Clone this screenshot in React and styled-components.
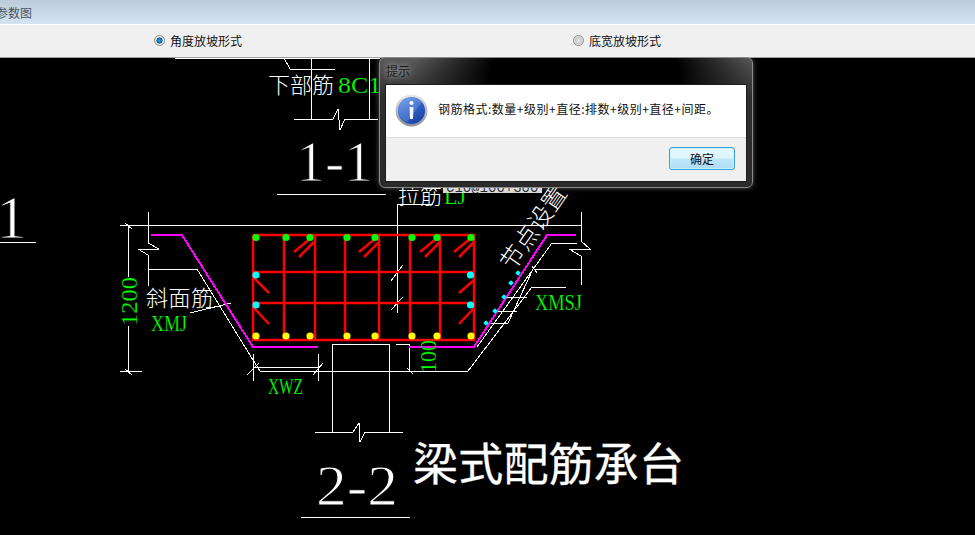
import React from "react";
import styled, { createGlobalStyle } from "styled-components";

const Global = createGlobalStyle`
  html, body { margin: 0; padding: 0; background: #000; overflow: hidden; }
  * { box-sizing: border-box; }
`;

const UI_FONT = `"Noto Sans CJK SC", "Liberation Sans", sans-serif`;

const Page = styled.div`
  position: relative;
  width: 975px;
  height: 535px;
  display: flex;
  flex-direction: column;
  font-family: ${UI_FONT};
  font-size: 12px;
  color: #111;
`;

const TitleBar = styled.div`
  height: 25px;
  flex: none;
  display: flex;
  align-items: center;
  margin-left: -4px;
  color: #4a5560;
  background: linear-gradient(#bbcbda, #d6e4f2);
  border-bottom: 1px solid #fff;
`;

const OptionsBar = styled.div`
  height: 33px;
  flex: none;
  display: flex;
  align-items: center;
  padding: 0 0 1px 154px;
  background: #f0f0f0;
  border-bottom: 1px solid #a0a0a0;
`;

const Option = styled.label`
  flex: none;
  width: 419px;
  display: flex;
  align-items: center;
  gap: 5px;
`;

const RadioMark = styled.span`
  width: 11px;
  height: 11px;
  border-radius: 50%;
  border: 1px solid #8d8d8d;
  display: block;
  background: ${(p) =>
    p.$on
      ? "radial-gradient(circle, #2ea6dc 0, #0a5f9e 45%, #f4f4f4 52%, #dcdcdc 100%)"
      : "radial-gradient(circle, #e8e8e8 0, #c8c8c8 55%, #f0f0f0 70%, #dedede 100%)"};
`;

const Canvas = styled.div`
  position: relative;
  flex: 1;
  background: #000;
`;

const Drawing = styled.svg`
  display: block;
  width: 975px;
  height: 477px;
`;

const Wire = styled.polyline`
  fill: none;
  stroke: ${(p) => p.$color || "#fff"};
  stroke-width: ${(p) => p.$w || 1}px;
  shape-rendering: ${(p) => (p.$smooth ? "auto" : "crispEdges")};
`;

const Dot = styled.circle`
  fill: ${(p) => p.$color};
`;

const Diamond = styled.rect`
  fill: #00ffff;
`;

const CadCn = styled.text`
  font-family: "Noto Sans CJK SC", sans-serif;
  font-weight: 300;
  fill: #fff;
  font-size: ${(p) => p.$size || 22}px;
`;

const CadHeading = styled.text`
  font-family: "Noto Sans CJK SC", sans-serif;
  font-weight: 400;
  fill: #fff;
  stroke: #fff;
  stroke-width: 0.3px;
  font-size: 45px;
`;

/* the black stroke over the fill thins the glyphs to the hairline look of CAD text */
const CadLatin = styled.text`
  font-family: "Liberation Serif", serif;
  fill: ${(p) => p.$color || "#00ff00"};
  stroke: #000;
  stroke-width: ${(p) => p.$thin || 0.2}px;
  font-size: ${(p) => p.$size || 24}px;
`;

const Tag = styled.div`
  position: absolute;
  left: 443px;
  top: 128px;
  width: 99px;
  height: 7px;
  overflow: hidden;
  background: #d8d8d8;
  font-family: "Liberation Mono", monospace;
  font-size: 14px;
  line-height: 9px;
  color: #222;
  padding-left: 3px;
  white-space: nowrap;
  display: flex;
  align-items: flex-end;
`;

const Dialog = styled.div`
  position: absolute;
  left: 379px;
  top: 57px;
  width: 374px;
  height: 131px;
  padding: 0 5px 5px 5px;
  display: flex;
  flex-direction: column;
  border: 1px solid #8a8a8a;
  border-radius: 6px;
  box-shadow: 0 0 5px rgba(255, 255, 255, 0.35);
  background:
    radial-gradient(ellipse 46% 60% at 55% 12%, #000 55%, rgba(0, 0, 0, 0) 100%),
    linear-gradient(#5a5a5a, #2e2e2e 30%, #2a2a2a);
`;

const DialogTitle = styled.div`
  height: 26px;
  flex: none;
  display: flex;
  align-items: center;
  padding: 0 0 1px 1px;
  font-size: 12px;
  color: #1a1a1a;
  text-shadow: 0 0 6px rgba(255, 255, 255, 0.55), 0 0 10px rgba(255, 255, 255, 0.35);
`;

const DialogPanel = styled.div`
  flex: 1;
  display: flex;
  flex-direction: column;
  border: 1px solid #1c1c1c;
  background: #f0f0f0;
`;

const MessageRow = styled.div`
  height: 53px;
  flex: none;
  display: flex;
  align-items: center;
  gap: 10px;
  padding: 0 0 2px 9px;
  background: #fff;
  border-bottom: 1px solid #dfdfdf;
`;

const Message = styled.span`
  font-size: 12px;
  letter-spacing: 0.5px;
  white-space: nowrap;
  color: #111;
  padding-bottom: 4px;
`;

const ButtonRow = styled.div`
  flex: 1;
  display: flex;
  justify-content: flex-end;
  align-items: flex-start;
  padding: 9px 11px 0 0;
`;

const OkButton = styled.button`
  width: 66px;
  height: 23px;
  padding: 0;
  font-family: ${UI_FONT};
  font-size: 12px;
  color: #111;
  border: 1px solid #3c9fd6;
  border-radius: 3px;
  box-shadow: inset 0 0 0 1px #c4effc;
  background: linear-gradient(#e6f8ff, #dcf4fe 45%, #bde6fa 55%, #aedcf4);
`;

const InfoIcon = () => (
  <svg width="33" height="33" viewBox="0 0 33 33">
    <defs>
      <linearGradient id="ring" x1="0" y1="0" x2="0" y2="1">
        <stop offset="0" stopColor="#e8e8ec" />
        <stop offset="1" stopColor="#8e8e9a" />
      </linearGradient>
      <linearGradient id="blue" x1="0.2" y1="0" x2="0.8" y2="1">
        <stop offset="0" stopColor="#6f9be6" />
        <stop offset="0.5" stopColor="#2f5fc4" />
        <stop offset="1" stopColor="#1a3fa6" />
      </linearGradient>
    </defs>
    <circle cx="16.5" cy="16.5" r="16" fill="url(#ring)" />
    <circle cx="16.5" cy="16.5" r="13.6" fill="url(#blue)" />
    <path d="M4 21 A13.6 13.6 0 0 1 27 8 L12 28 A13.6 13.6 0 0 1 4 21Z" fill="#8fb3ee" opacity="0.3" />
    <circle cx="16.5" cy="9" r="2.1" fill="#fff" />
    <path d="M14.6 13h3.8l-.4 12h-3z" fill="#f2f5fb" />
  </svg>
);

const WHITE = [
  "175,58 380,58",
  "284,58 290,69 335,69",
  "311,58 311,119",
  "369,58 369,119",
  "294,119 333,119 338,109 340,130 345,119 378,119",
  "277,194 386,194",
  "0,242 36,242",
  "148,212 148,243 159,249 138,249 148,255 148,286",
  "148,225 581,225",
  "148,269 197,269 253,360 260,371 468,371 532,287 566,287",
  "128,225 128,277",
  "128,326 128,371",
  "120,225 148,225",
  "120,371 142,371",
  "125,223 132,229",
  "125,369 132,375",
  "190,313 231,303",
  "253,367 319,367",
  "253,354 253,381",
  "318,354 318,381",
  "247,375 259,363",
  "313,375 323,363",
  "397,204 433,204",
  "397,204 397,313",
  "403,265 391,281",
  "403,297 391,310",
  "577,243 552,243 477,347",
  "581,212 581,241 590,249 569,249 581,256 581,285",
  "535,269 581,269",
  "533,269 508,323 487,323",
  "497,311 517,311",
  "505,297 527,297",
  "532,266 537,273",
  "396,344 410,344",
  "409,344 409,371",
  "407,368 413,374",
  "332,344 389,344",
  "332,344 332,432",
  "389,344 389,432",
  "315,432 353,432 359,423 360,442 365,432 403,432",
  "301,517 410,517",
];

const MAGENTA = [
  "151,235 182,235 253,347 318,347",
  "409,347 474,347 547,235 576,235",
];

const RED = [
  "253,235 474,235 474,340 253,340 253,235",
  "284,235 284,340",
  "315,235 315,340",
  "345,235 345,340",
  "379,235 379,340",
  "410,235 410,340",
  "440,235 440,340",
  "253,272 474,272",
  "253,303 474,303",
  "311,238 294,252",
  "314,242 299,257",
  "376,238 359,252",
  "379,242 364,257",
  "437,238 420,252",
  "440,242 425,257",
  "471,238 454,252",
  "474,242 459,257",
  "254,278 269,293",
  "254,308 269,324",
  "474,280 459,293",
  "474,308 459,324",
];

const BAR_X = [256, 286, 310, 347, 375, 412, 437, 471];
const SIDE_Y = [275, 305];
const DIAMONDS = [
  [518, 273],
  [511, 283],
  [504, 297],
  [495, 311],
  [486, 323],
];

export default function App() {
  return (
    <Page>
      <Global />
      <TitleBar>参数图</TitleBar>
      <OptionsBar>
        <Option>
          <RadioMark $on />
          角度放坡形式
        </Option>
        <Option>
          <RadioMark />
          底宽放坡形式
        </Option>
      </OptionsBar>
      <Canvas>
        <Drawing viewBox="0 58 975 477">
          {WHITE.map((pts) => (
            <Wire key={pts} points={pts} />
          ))}
          {RED.map((pts) => (
            <Wire key={pts} points={pts} $color="#ff0000" $w={2.5} $smooth />
          ))}
          {MAGENTA.map((pts) => (
            <Wire key={pts} points={pts} $color="#ff00ff" $w={2} />
          ))}
          {BAR_X.map((x) => (
            <Dot key={`g${x}`} cx={x} cy={237.5} r={3.6} $color="#00ff00" />
          ))}
          {BAR_X.map((x) => (
            <Dot key={`y${x}`} cx={x} cy={336} r={3.6} $color="#ffff00" />
          ))}
          {SIDE_Y.map((y) => (
            <React.Fragment key={y}>
              <Dot cx={256} cy={y} r={3.6} $color="#00ffff" />
              <Dot cx={470.5} cy={y} r={3.6} $color="#00ffff" />
            </React.Fragment>
          ))}
          {DIAMONDS.map(([x, y]) => (
            <Diamond key={x} x={x - 2} y={y - 2} width={4} height={4} transform={`rotate(45 ${x} ${y})`} />
          ))}

          <CadCn x={268} y={93}>下部筋</CadCn>
          <CadLatin x={338} y={93} textLength={56} lengthAdjust="spacingAndGlyphs">8C16</CadLatin>
          <CadLatin x={296} y={181} $size={58} $thin={1} $color="#fff" textLength={77} lengthAdjust="spacingAndGlyphs">1-1</CadLatin>
          <CadLatin x={-4} y={238} $size={62} $thin={1} $color="#fff">1</CadLatin>
          <CadCn x={398} y={204}>拉筋</CadCn>
          <CadLatin x={444} y={204} textLength={22} lengthAdjust="spacingAndGlyphs">LJ</CadLatin>
          <CadCn x={146} y={306} textLength={67}>斜面筋</CadCn>
          <CadLatin x={151} y={331} textLength={36} lengthAdjust="spacingAndGlyphs">XMJ</CadLatin>
          <CadLatin x={268} y={394} textLength={35} lengthAdjust="spacingAndGlyphs">XWZ</CadLatin>
          <CadLatin x={535} y={310} textLength={47} lengthAdjust="spacingAndGlyphs">XMSJ</CadLatin>
          <CadLatin transform="translate(137 326) rotate(-90)" textLength={49} lengthAdjust="spacingAndGlyphs">1200</CadLatin>
          <CadLatin transform="translate(436 373) rotate(-90)" textLength={33} lengthAdjust="spacingAndGlyphs">100</CadLatin>
          <CadCn $size={24} transform="translate(513 272) rotate(-55)" textLength={96}>节点设置</CadCn>
          <CadLatin x={316} y={505} $size={58} $thin={1} $color="#fff" textLength={82} lengthAdjust="spacingAndGlyphs">2-2</CadLatin>
          <CadHeading x={413} y={481} textLength={271}>梁式配筋承台</CadHeading>
        </Drawing>
        <Tag>C10@100+300</Tag>
      </Canvas>
      <Dialog>
        <DialogTitle>提示</DialogTitle>
        <DialogPanel>
          <MessageRow>
            <InfoIcon />
            <Message>钢筋格式:数量+级别+直径:排数+级别+直径+间距。</Message>
          </MessageRow>
          <ButtonRow>
            <OkButton>确定</OkButton>
          </ButtonRow>
        </DialogPanel>
      </Dialog>
    </Page>
  );
}
